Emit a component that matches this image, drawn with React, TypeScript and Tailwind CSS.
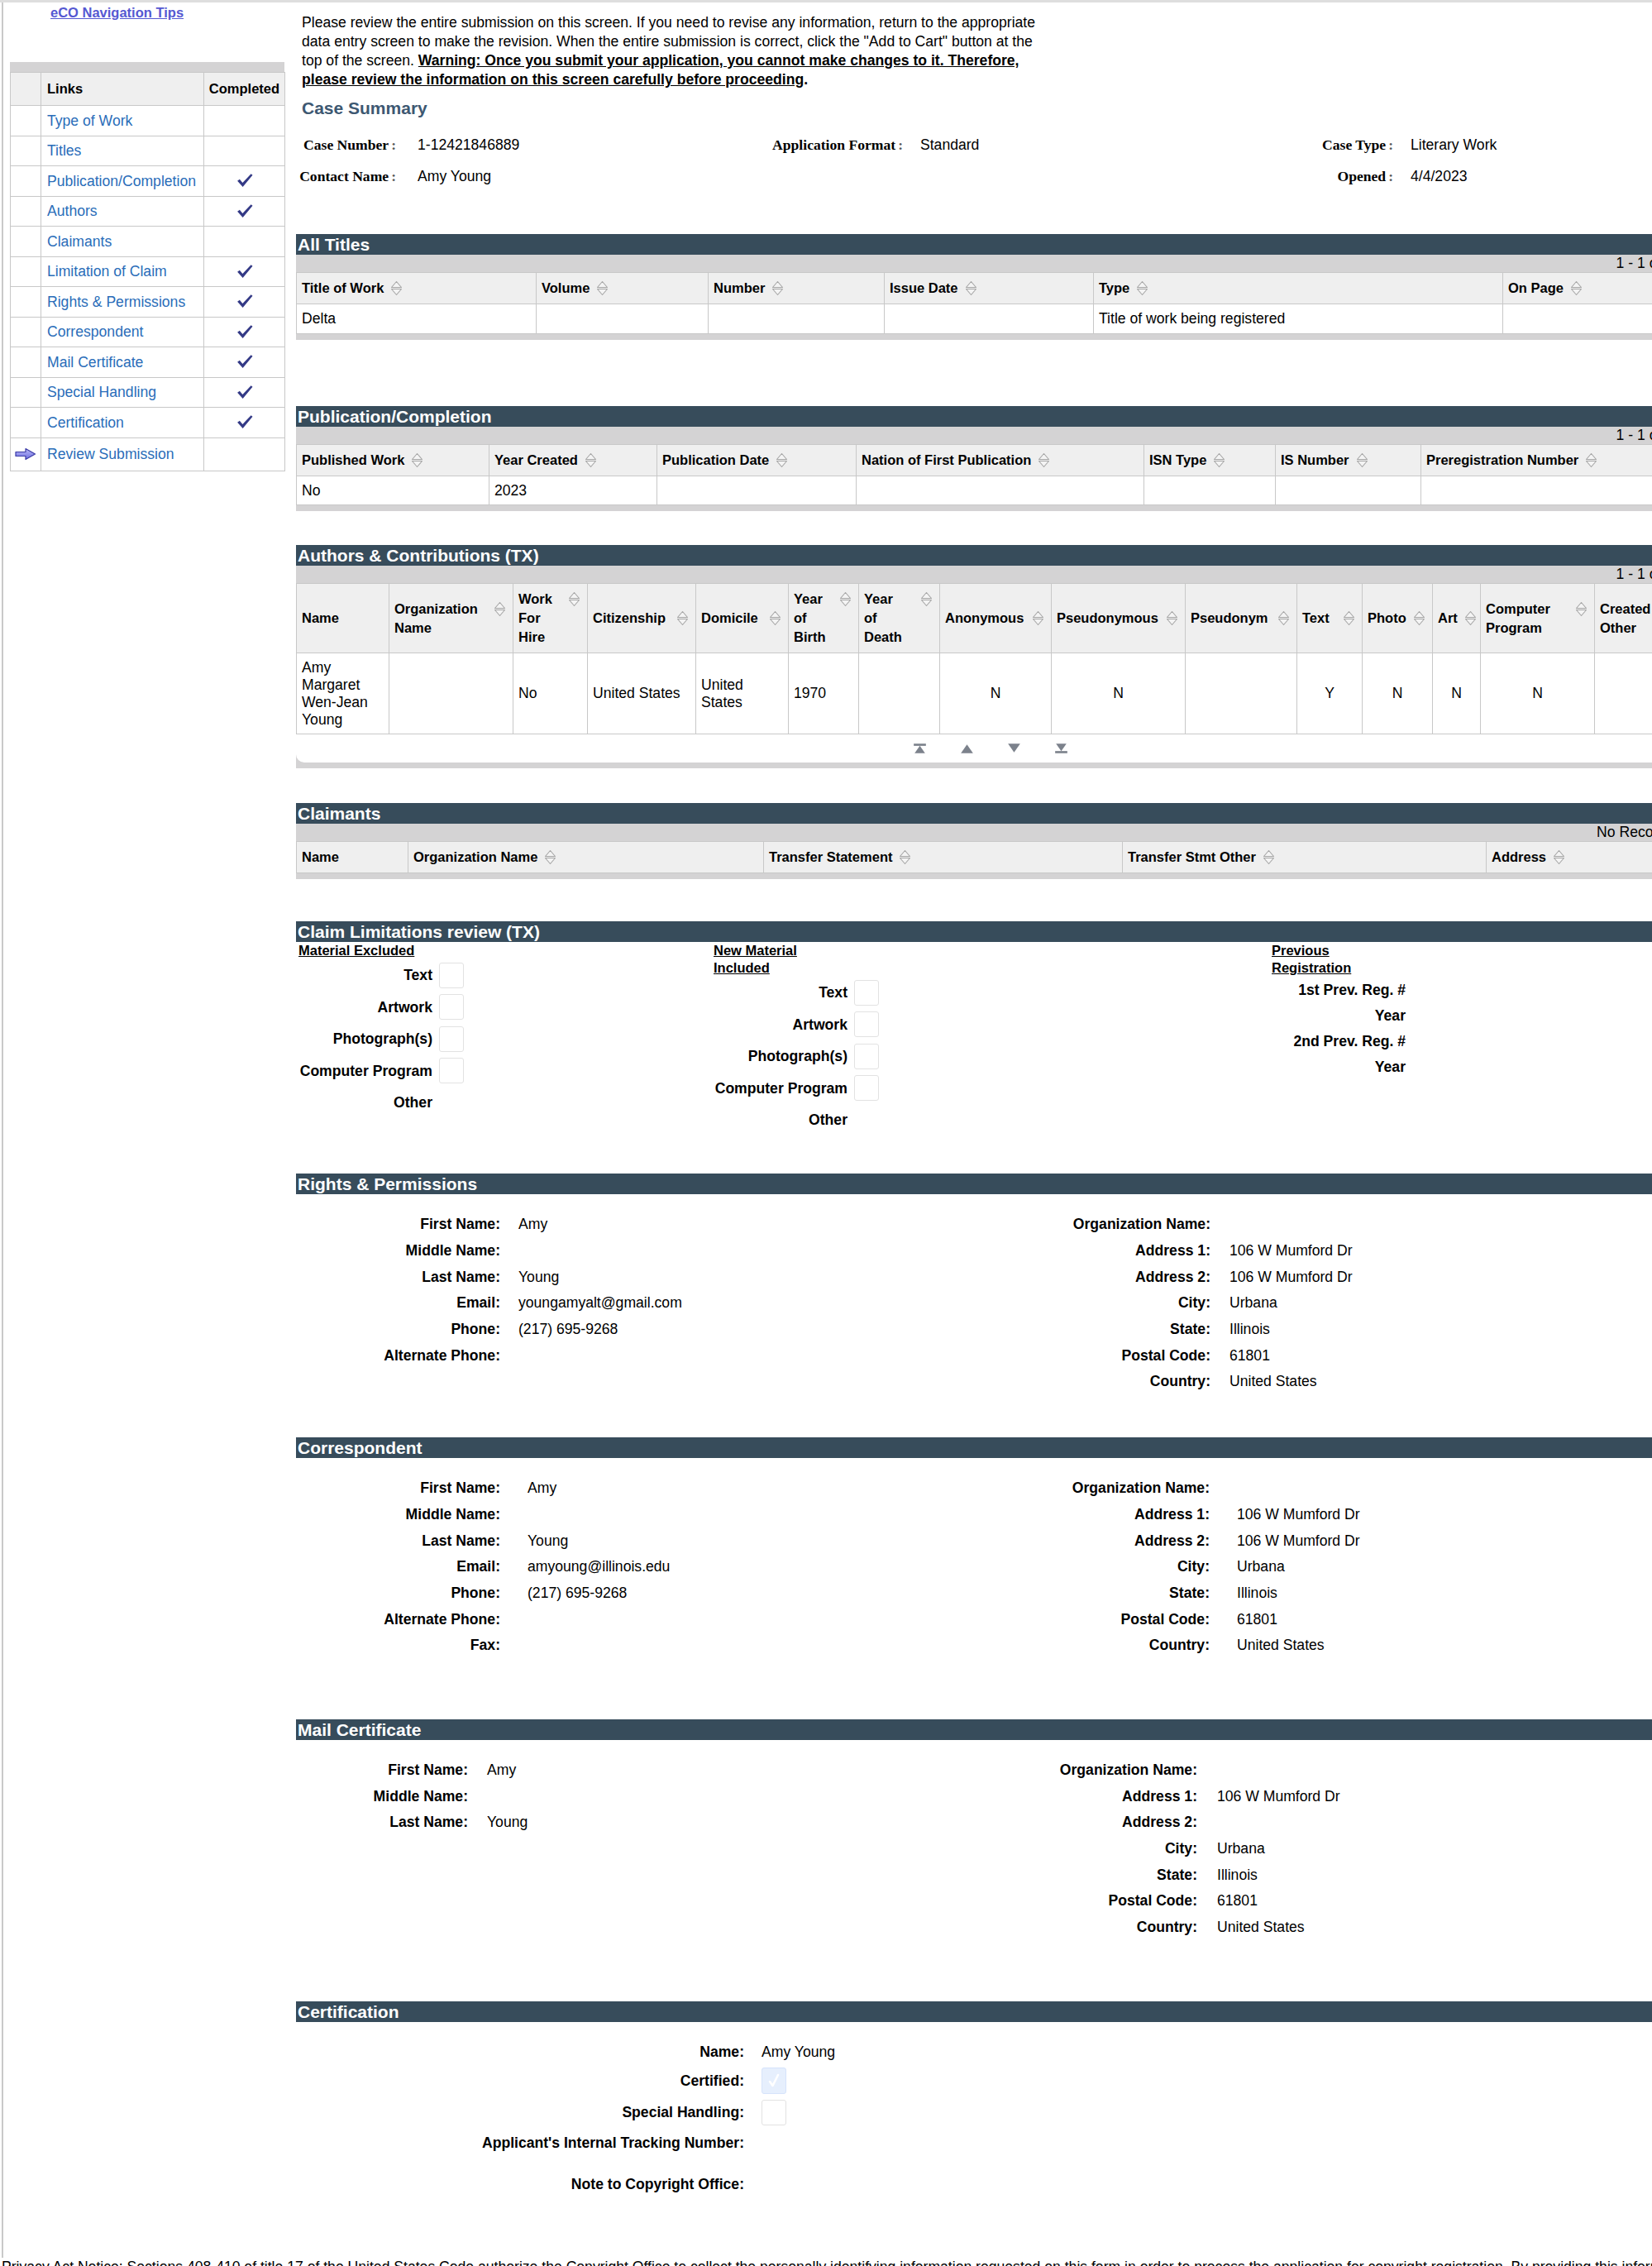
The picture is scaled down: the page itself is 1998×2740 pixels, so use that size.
import React from "react";

type Col = { label: string; w: string; sort?: boolean; align?: string };

const NAV = [
  { label: "Type of Work", done: false },
  { label: "Titles", done: false },
  { label: "Publication/Completion", done: true },
  { label: "Authors", done: true },
  { label: "Claimants", done: false },
  { label: "Limitation of Claim", done: true },
  { label: "Rights & Permissions", done: true },
  { label: "Correspondent", done: true },
  { label: "Mail Certificate", done: true },
  { label: "Special Handling", done: true },
  { label: "Certification", done: true },
];

const TITLE_COLS: Col[] = [
  { label: "Title of Work", w: "w-[290px]", sort: true },
  { label: "Volume", w: "w-[208px]", sort: true },
  { label: "Number", w: "w-[213px]", sort: true },
  { label: "Issue Date", w: "w-[253px]", sort: true },
  { label: "Type", w: "w-[495px]", sort: true },
  { label: "On Page", w: "w-[213px]", sort: true },
];

const PUB_COLS: Col[] = [
  { label: "Published Work", w: "w-[233px]", sort: true },
  { label: "Year Created", w: "w-[203px]", sort: true },
  { label: "Publication Date", w: "w-[241px]", sort: true },
  { label: "Nation of First Publication", w: "w-[348px]", sort: true },
  { label: "ISN Type", w: "w-[159px]", sort: true },
  { label: "IS Number", w: "w-[176px]", sort: true },
  { label: "Preregistration Number", w: "w-[312px]", sort: true },
];

const AUTHOR_COLS: Col[] = [
  { label: "Name", w: "w-[112px]" },
  { label: "Organization\nName", w: "w-[150px]", sort: true },
  { label: "Work\nFor\nHire", w: "w-[90px]", sort: true },
  { label: "Citizenship", w: "w-[131px]", sort: true },
  { label: "Domicile", w: "w-[112px]", sort: true },
  { label: "Year\nof\nBirth", w: "w-[85px]", sort: true },
  { label: "Year\nof\nDeath", w: "w-[98px]", sort: true },
  { label: "Anonymous", w: "w-[135px]", sort: true, align: "text-center" },
  { label: "Pseudonymous", w: "w-[162px]", sort: true, align: "text-center" },
  { label: "Pseudonym", w: "w-[135px]", sort: true },
  { label: "Text", w: "w-[79px]", sort: true, align: "text-center" },
  { label: "Photo", w: "w-[85px]", sort: true, align: "text-center" },
  { label: "Art", w: "w-[58px]", sort: true, align: "text-center" },
  { label: "Computer\nProgram", w: "w-[138px]", sort: true, align: "text-center" },
  { label: "Created\nOther", w: "w-[102px]", sort: true, align: "text-center" },
];

const CLAIMANT_COLS: Col[] = [
  { label: "Name", w: "w-[135px]" },
  { label: "Organization Name", w: "w-[430px]", sort: true },
  { label: "Transfer Statement", w: "w-[434px]", sort: true },
  { label: "Transfer Stmt Other", w: "w-[440px]", sort: true },
  { label: "Address", w: "w-[233px]", sort: true },
];

function SortIcon() {
  return (
    <svg width="15" height="19" viewBox="0 0 15 19" className="mt-[2px] shrink-0">
      <path d="M7.5 1.5L13.5 8.5H1.5Z" fill="#f4f4f4" stroke="#a6a6a6" strokeWidth="1.1" strokeLinejoin="round" />
      <path d="M1.5 10.5H13.5L7.5 17.5Z" fill="#f4f4f4" stroke="#a6a6a6" strokeWidth="1.1" strokeLinejoin="round" />
    </svg>
  );
}

function Check() {
  return (
    <svg width="22" height="19" viewBox="0 0 18 16">
      <path d="M1.5 8.2L3.8 6.5L6.8 10L15.4 1L17 2.3L7 14.4Z" fill="#343a86" />
    </svg>
  );
}

function Bar({ title }: { title: string }) {
  return (
    <div className="h-[25px] bg-[#374c5b] pl-[2px] text-[21px] font-bold leading-[25px] text-white">
      {title}
    </div>
  );
}

function SubBar({ text }: { text: string }) {
  return (
    <div className="h-[21px] bg-[#d4d3d4] pr-[6px] text-right text-[17.6px] leading-[21px]">{text}</div>
  );
}

function DataTable({ cols, rows, spread }: { cols: Col[]; rows: string[][]; spread?: boolean }) {
  return (
    <table className="w-[1672px] table-fixed border-collapse">
      <colgroup>
        {cols.map((c) => (
          <col key={c.label} className={c.w} />
        ))}
      </colgroup>
      <thead>
        <tr className="bg-[#efefef]">
          {cols.map((c) => (
            <th
              key={c.label}
              className="border border-[#c8c8c8] py-[7px] pl-[6px] pr-[8px] text-left align-middle text-[16.5px] font-bold leading-[23px]"
            >
              <div className={spread ? "flex items-start justify-between gap-2" : "flex items-start gap-2"}>
                <span className="whitespace-pre-line">{c.label}</span>
                {c.sort && <SortIcon />}
              </div>
            </th>
          ))}
        </tr>
      </thead>
      <tbody>
        {rows.map((r, i) => (
          <tr key={i}>
            {r.map((v, j) => (
              <td
                key={j}
                className={`border border-[#c8c8c8] px-[6px] py-[7px] align-middle text-[17.6px] leading-[20.7px] whitespace-pre-line ${cols[j].align ?? "text-left"}`}
              >
                {v}
              </td>
            ))}
          </tr>
        ))}
      </tbody>
    </table>
  );
}

function Box({ checked }: { checked?: boolean }) {
  if (checked) {
    return (
      <div className="ml-[8px] flex h-[32px] w-[30px] items-center justify-center rounded-[3px] border border-[#d6e3fb] bg-[#e6effd]">
        <svg width="14" height="20" viewBox="0 0 14 20">
          <path d="M2 11L5.5 16L12 3" fill="none" stroke="#ffffff" strokeWidth="2.6" strokeLinecap="round" strokeLinejoin="round" />
        </svg>
      </div>
    );
  }
  return <div className="ml-[8px] h-[31px] w-[30px] rounded-[3px] border border-[#e2e2e2] bg-white" />;
}

function ClaimCol({ head, rows, boxes, rowH, w }: { head: React.ReactNode; rows: string[]; boxes: boolean; rowH: string; w: string }) {
  return (
    <div className={`${w} shrink-0 pl-[3px]`}>
      <div className="text-[16.5px] font-bold leading-[21px] underline">{head}</div>
      {rows.map((r, i) => (
        <div key={i} className={`flex ${rowH} items-center`}>
          <div className="w-[162px] whitespace-nowrap text-right text-[17.6px] font-bold">{r}</div>
          {boxes && r !== "Other" && <Box />}
        </div>
      ))}
    </div>
  );
}

function InfoRows({ rows, labelW, valuePl, w }: { rows: [string, string][]; labelW: string; valuePl: string; w?: string }) {
  return (
    <div className={`${w ?? ""} flex flex-col`}>
      {rows.map(([l, v]) => (
        <div key={l} className="flex h-[31.7px] items-center">
          <div className={`${labelW} shrink-0 text-right font-bold`}>{l}</div>
          <div className={valuePl}>{v}</div>
        </div>
      ))}
    </div>
  );
}

function Pager() {
  const c = "#7c828c";
  return (
    <div className="bg-[#d4d3d4] pb-[7px]">
      <div className="flex h-[34px] items-center justify-center gap-[36px] rounded-b-[10px] bg-white pl-[8px]">
        <svg width="21" height="12" viewBox="0 0 20 11">
          <rect x="3" y="0" width="14" height="2.5" fill={c} />
          <path d="M10 2.5L16 11H4Z" fill={c} />
        </svg>
        <svg width="21" height="12" viewBox="0 0 20 11">
          <path d="M10 1L17 11H3Z" fill={c} />
        </svg>
        <svg width="21" height="12" viewBox="0 0 20 11">
          <path d="M3 0H17L10 10Z" fill={c} />
        </svg>
        <svg width="21" height="12" viewBox="0 0 20 11">
          <path d="M4 0H16L10 8.5Z" fill={c} />
          <rect x="3" y="8.5" width="14" height="2.5" fill={c} />
        </svg>
      </div>
    </div>
  );
}

function Sidebar() {
  return (
    <div className="w-[354px] shrink-0 pl-[8px] pt-[2px]">
      <a className="ml-[49px] block text-[16.5px] font-bold leading-[20px] text-[#5558d2] underline">eCO Navigation Tips</a>
      <div className="mt-[50px] w-[332px]">
        <div className="h-[12px] bg-[#d4d3d4]" />
        <table className="w-[332px] table-fixed border-collapse">
          <colgroup>
            <col className="w-[37px]" />
            <col className="w-[197px]" />
            <col className="w-[98px]" />
          </colgroup>
          <tbody>
            <tr className="h-[40px] bg-[#efefef] text-[16.5px] font-bold">
              <td className="border border-[#c8c8c8]" />
              <td className="border border-[#c8c8c8] pl-[7px]">Links</td>
              <td className="border border-[#c8c8c8] text-center">Completed</td>
            </tr>
            {NAV.map((n) => (
              <tr key={n.label} className="h-[36.5px] text-[17.6px]">
                <td className="border border-[#c8c8c8]" />
                <td className="border border-[#c8c8c8] pl-[7px] text-[#2a6db9]">{n.label}</td>
                <td className="border border-[#c8c8c8]">
                  {n.done && (
                    <div className="flex justify-center">
                      <Check />
                    </div>
                  )}
                </td>
              </tr>
            ))}
            <tr className="h-[40px] text-[17.6px]">
              <td className="border border-[#c8c8c8]">
                <div className="flex justify-center">
                  <svg width="26" height="16" viewBox="0 0 26 16">
                    <defs>
                      <linearGradient id="ar" x1="0" y1="0" x2="0" y2="1">
                        <stop offset="0" stopColor="#b9b9f6" />
                        <stop offset="1" stopColor="#6d6de0" />
                      </linearGradient>
                    </defs>
                    <path d="M1 5.5H13V1.5L24.5 8L13 14.5V10.5H1Z" fill="url(#ar)" stroke="#3b3ba6" strokeWidth="1.2" strokeLinejoin="round" />
                  </svg>
                </div>
              </td>
              <td className="border border-[#c8c8c8] pl-[7px] text-[#2a6db9]">Review Submission</td>
              <td className="border border-[#c8c8c8]" />
            </tr>
          </tbody>
        </table>
      </div>
    </div>
  );
}

export default function App() {
  const serif = "whitespace-nowrap text-right font-['Liberation_Serif',serif] font-bold leading-[38px]";
  return (
    <div className="h-[2740px] w-[1998px] overflow-hidden border-t-[3px] border-t-[#dedede] bg-white font-['Liberation_Sans',Arial,sans-serif] text-[17.6px] text-black">
      <div className="ml-[2px] flex border-l-[2px] border-l-[#c9c9c9]">
        <Sidebar />
        <div className="w-[1672px] shrink-0 pb-[73px] pt-[13px]">
          <p className="pl-[7px] leading-[23px] whitespace-nowrap">
            Please review the entire submission on this screen. If you need to revise any information, return to the appropriate
            <br />
            data entry screen to make the revision. When the entire submission is correct, click the "Add to Cart" button at the
            <br />
            top of the screen.{" "}
            <b>
              <u>Warning: Once you submit your application, you cannot make changes to it. Therefore,</u>
              <br />
              <u>please review the information on this screen carefully before proceeding</u>.
            </b>
          </p>

          <h2 className="mt-[11px] pl-[7px] text-[21px] font-bold leading-[24px] text-[#3d5872]">Case Summary</h2>

          <div className="mt-[13px] grid grid-cols-[121px_450px_163px_438px_155px_1fr] grid-rows-[38px_38px] items-center">
            <div className={serif}>Case Number<span className="ml-[3px] text-[#555]">:</span></div>
            <div className="pl-[26px]">1-12421846889</div>
            <div className={serif}>Application Format<span className="ml-[3px] text-[#555]">:</span></div>
            <div className="pl-[21px]">Standard</div>
            <div className={serif}>Case Type<span className="ml-[3px] text-[#555]">:</span></div>
            <div className="pl-[21px]">Literary Work</div>
            <div className={serif}>Contact Name<span className="ml-[3px] text-[#555]">:</span></div>
            <div className="pl-[26px]">Amy Young</div>
            <div />
            <div />
            <div className={serif}>Opened<span className="ml-[3px] text-[#555]">:</span></div>
            <div className="pl-[21px]">4/4/2023</div>
          </div>

          <section className="mt-[51px]">
            <Bar title="All Titles" />
            <SubBar text="1 - 1 of 1" />
            <DataTable cols={TITLE_COLS} rows={[["Delta", "", "", "", "Title of work being registered", ""]]} />
            <div className="h-[7px] bg-[#d4d3d4]" />
          </section>

          <section className="mt-[80px]">
            <Bar title="Publication/Completion" />
            <SubBar text="1 - 1 of 1" />
            <DataTable cols={PUB_COLS} rows={[["No", "2023", "", "", "", "", ""]]} />
            <div className="h-[7px] bg-[#d4d3d4]" />
          </section>

          <section className="mt-[41px]">
            <Bar title="Authors & Contributions (TX)" />
            <SubBar text="1 - 1 of 1" />
            <DataTable
              cols={AUTHOR_COLS}
              spread
              rows={[
                [
                  "Amy\nMargaret\nWen-Jean\nYoung",
                  "",
                  "No",
                  "United States",
                  "United\nStates",
                  "1970",
                  "",
                  "N",
                  "N",
                  "",
                  "Y",
                  "N",
                  "N",
                  "N",
                  "",
                ],
              ]}
            />
            <Pager />
          </section>

          <section className="mt-[42px]">
            <Bar title="Claimants" />
            <SubBar text="No Records" />
            <DataTable cols={CLAIMANT_COLS} rows={[]} />
            <div className="h-[7px] bg-[#d4d3d4]" />
          </section>

          <section className="mt-[51px]">
            <Bar title="Claim Limitations review (TX)" />
            <div className="flex">
              <ClaimCol
                w="w-[502px]"
                head="Material Excluded"
                rows={["Text", "Artwork", "Photograph(s)", "Computer Program", "Other"]}
                boxes
                rowH="h-[38.5px]"
              />
              <ClaimCol
                w="w-[675px]"
                head={
                  <>
                    New Material
                    <br />
                    Included
                  </>
                }
                rows={["Text", "Artwork", "Photograph(s)", "Computer Program", "Other"]}
                boxes
                rowH="h-[38.5px]"
              />
              <ClaimCol
                w="w-[300px]"
                head={
                  <>
                    Previous
                    <br />
                    Registration
                  </>
                }
                rows={["1st Prev. Reg. #", "Year", "2nd Prev. Reg. #", "Year"]}
                boxes={false}
                rowH="h-[31px]"
              />
            </div>
          </section>

          <section className="mt-[45px]">
            <Bar title="Rights & Permissions" />
            <div className="mt-[21px] flex">
              <InfoRows
                w="w-[700px]"
                labelW="w-[247px]"
                valuePl="pl-[22px]"
                rows={[
                  ["First Name:", "Amy"],
                  ["Middle Name:", ""],
                  ["Last Name:", "Young"],
                  ["Email:", "youngamyalt@gmail.com"],
                  ["Phone:", "(217) 695-9268"],
                  ["Alternate Phone:", ""],
                ]}
              />
              <InfoRows
                labelW="w-[406px]"
                valuePl="pl-[23px]"
                rows={[
                  ["Organization Name:", ""],
                  ["Address 1:", "106 W Mumford Dr"],
                  ["Address 2:", "106 W Mumford Dr"],
                  ["City:", "Urbana"],
                  ["State:", "Illinois"],
                  ["Postal Code:", "61801"],
                  ["Country:", "United States"],
                ]}
              />
            </div>
          </section>

          <section className="mt-[51px]">
            <Bar title="Correspondent" />
            <div className="mt-[21px] flex">
              <InfoRows
                w="w-[700px]"
                labelW="w-[247px]"
                valuePl="pl-[33px]"
                rows={[
                  ["First Name:", "Amy"],
                  ["Middle Name:", ""],
                  ["Last Name:", "Young"],
                  ["Email:", "amyoung@illinois.edu"],
                  ["Phone:", "(217) 695-9268"],
                  ["Alternate Phone:", ""],
                  ["Fax:", ""],
                ]}
              />
              <InfoRows
                labelW="w-[405px]"
                valuePl="pl-[33px]"
                rows={[
                  ["Organization Name:", ""],
                  ["Address 1:", "106 W Mumford Dr"],
                  ["Address 2:", "106 W Mumford Dr"],
                  ["City:", "Urbana"],
                  ["State:", "Illinois"],
                  ["Postal Code:", "61801"],
                  ["Country:", "United States"],
                ]}
              />
            </div>
          </section>

          <section className="mt-[74px]">
            <Bar title="Mail Certificate" />
            <div className="mt-[20px] flex">
              <InfoRows
                w="w-[700px]"
                labelW="w-[208px]"
                valuePl="pl-[23px]"
                rows={[
                  ["First Name:", "Amy"],
                  ["Middle Name:", ""],
                  ["Last Name:", "Young"],
                ]}
              />
              <InfoRows
                labelW="w-[390px]"
                valuePl="pl-[24px]"
                rows={[
                  ["Organization Name:", ""],
                  ["Address 1:", "106 W Mumford Dr"],
                  ["Address 2:", ""],
                  ["City:", "Urbana"],
                  ["State:", "Illinois"],
                  ["Postal Code:", "61801"],
                  ["Country:", "United States"],
                ]}
              />
            </div>
          </section>

          <section className="mt-[74px]">
            <Bar title="Certification" />
            <div className="mt-[20px] flex flex-col">
              <div className="flex h-[32px] items-center">
                <div className="w-[542px] text-right font-bold">Name:</div>
                <div className="pl-[21px]">Amy Young</div>
              </div>
              <div className="flex h-[38px] items-center">
                <div className="w-[542px] text-right font-bold">Certified:</div>
                <div className="pl-[13px]">
                  <Box checked />
                </div>
              </div>
              <div className="flex h-[38px] items-center">
                <div className="w-[542px] text-right font-bold">Special Handling:</div>
                <div className="pl-[13px]">
                  <Box />
                </div>
              </div>
              <div className="flex h-[36px] items-center">
                <div className="w-[542px] text-right font-bold">Applicant's Internal Tracking Number:</div>
              </div>
              <div className="mt-[16px] flex h-[32px] items-center">
                <div className="w-[542px] text-right font-bold">Note to Copyright Office:</div>
              </div>
            </div>
          </section>
        </div>
      </div>
      <p className="whitespace-nowrap pl-[2px] leading-[23px]">
        Privacy Act Notice: Sections 408-410 of title 17 of the United States Code authorize the Copyright Office to collect the personally identifying information requested on this form in order to process the application for copyright registration. By providing this information you are agreeing to routine uses of the information.
      </p>
    </div>
  );
}
